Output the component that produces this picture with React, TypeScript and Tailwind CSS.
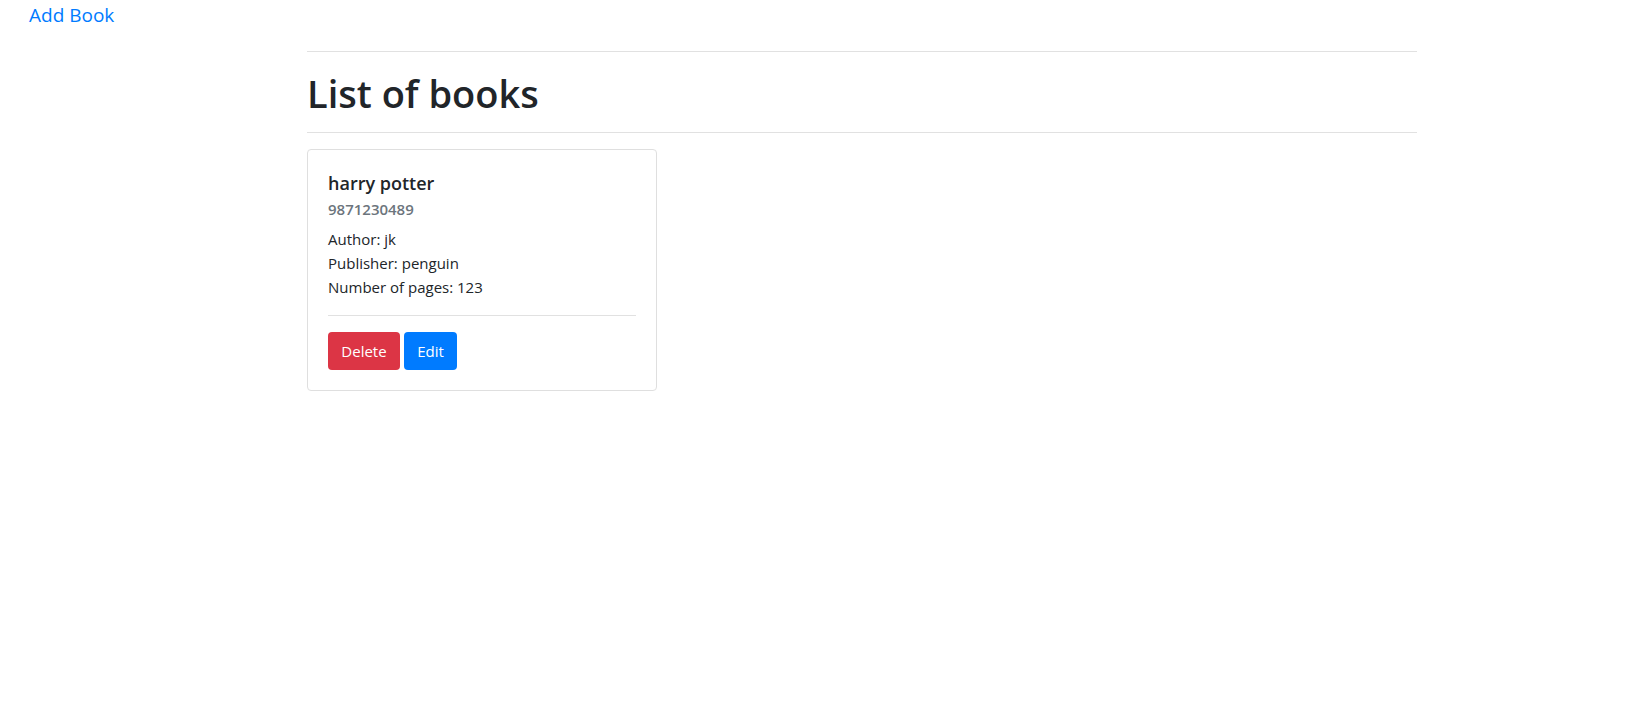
import React from "react";

export default function App() {
  return (
    <div className="min-h-screen bg-white text-[#212529]" style={{ fontFamily: '"Open Sans", "Noto Sans", sans-serif' }}>
      <div className="pl-[29px] h-[30px] flex items-center">
        <a href="#" className="text-[19px] leading-[30px] text-[#007bff]">Add Book</a>
      </div>
      <div className="ml-[307px] w-[1110px]">
        <div className="mt-[21px] h-px bg-[#e1e1e1]" />
        <div className="h-[80px] flex items-center pt-[2px]">
          <h1 className="text-[38px] font-semibold leading-[48px]">List of books</h1>
        </div>
        <div className="h-px bg-[#e1e1e1]" />
        <div className="mt-[16px] w-[350px] border border-[#dfdfdf] rounded-[4px] p-[20px]">
          <h5 className="text-[18px] font-semibold leading-[24px] pt-[1px]">harry potter</h5>
          <h6 className="mt-[4px] text-[15px] font-semibold text-[#6c757d] leading-[20px]">9871230489</h6>
          <div className="mt-[8px] text-[15px] leading-[24px]">
            <p>Author: jk</p>
            <p>Publisher: penguin</p>
            <p>Number of pages: 123</p>
          </div>
          <div className="mt-[16px] h-px bg-[#e1e1e1]" />
          <div className="mt-[16px] flex gap-[4px]">
            <button className="h-[38px] w-[72px] rounded-[4px] bg-[#dc3545] text-white text-[15px]">Delete</button>
            <button className="h-[38px] w-[53px] rounded-[4px] bg-[#007bff] text-white text-[15px]">Edit</button>
          </div>
        </div>
      </div>
    </div>
  );
}
